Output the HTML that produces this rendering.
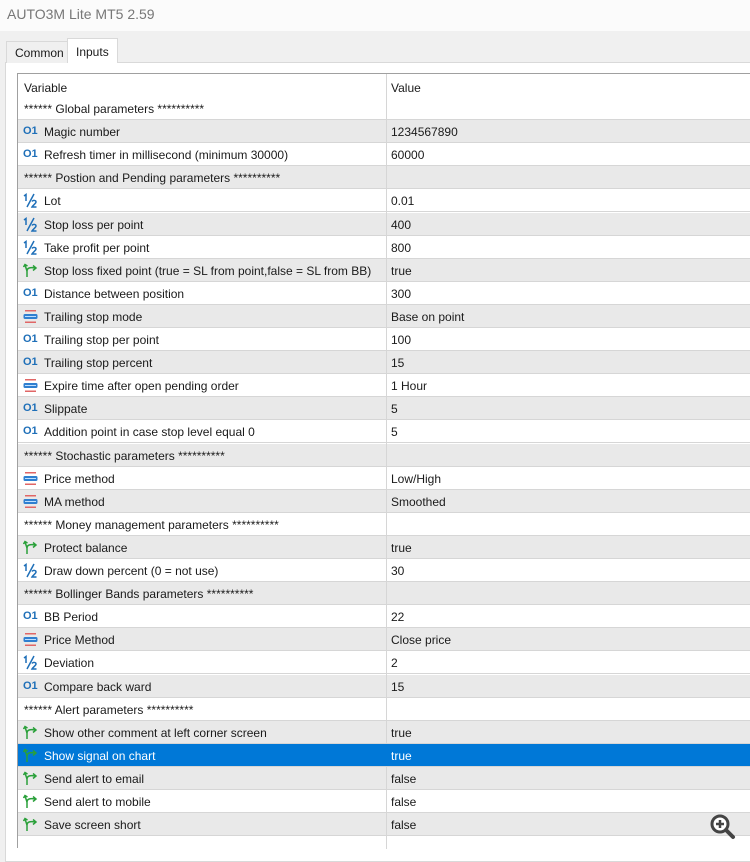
<!DOCTYPE html>
<html><head><style>
*{margin:0;padding:0;box-sizing:border-box}
body{width:750px;height:853px;overflow:hidden;background:#f0f0f0;font-family:"Liberation Sans",sans-serif;font-size:12px;color:#1a1a1a;position:relative}
.title{position:absolute;left:0;top:0;width:750px;height:31px;background:#fbfbfb;color:#777;font-size:14px;padding:6px 0 0 7px}
.panel{position:absolute;left:5px;top:62px;width:760px;height:800px;background:#fff;border:1px solid #d9d9d9}
.tab{position:absolute;top:41px;height:22px;border:1px solid #d9d9d9;border-bottom:none;font-size:12px;padding:4px 0 0 8px}
.t1{left:6px;width:62px;background:#f0f0f0}
.t2{left:67px;top:38px;height:25px;width:51px;background:#fff;padding-top:6px;z-index:2}
.tbl{position:absolute;left:17px;top:73px;width:740px;height:775px;border:1px solid #a0a0a0;border-bottom:none;background:#fff}
.row{position:absolute;left:0;width:740px;height:23.1px;border-bottom:1px solid #d6d6d6}
.row.g{background:#e9e9e9}
.row.sel{background:#0078d7;color:#fff;z-index:3}
.row span{position:absolute;top:5px;white-space:nowrap}
.v{left:373px}
.row .ic{position:absolute;left:5px;top:4px;width:15px;height:15px}
.div{position:absolute;left:368px;top:0;width:1px;height:775px;background:#d6d6d6;z-index:2}
.i01{color:#1e6fb8;font-size:11px;font-weight:bold;left:5px!important;top:5px!important}
</style></head><body>
<div class="title">AUTO3M Lite MT5 2.59</div>
<div class="panel"></div>
<div class="tab t1">Common</div>
<div class="tab t2">Inputs</div>
<div class="tbl">
<div class="div"></div>
<div class="row" style="top:0;height:23px;border:none"><span style="left:6px;top:7px">Variable</span><span class="v" style="top:7px">Value</span></div>
<div id="rows"></div>
</div>
<svg style="position:absolute;left:708px;top:812px" width="30" height="30" viewBox="0 0 30 30"><circle cx="12" cy="12" r="8" fill="#fff" stroke="#444" stroke-width="3"/><path d="M8 12h8M12 8v8" stroke="#444" stroke-width="2.5"/><path d="M18 18l7 7" stroke="#444" stroke-width="4" stroke-linecap="round"/></svg>
<script>
const R=[
["h","****** Global parameters **********",""],
["1","Magic number","1234567890"],
["1","Refresh timer in millisecond (minimum 30000)","60000"],
["h","****** Postion and Pending parameters **********",""],
["d","Lot","0.01"],
["d","Stop loss per point","400"],
["d","Take profit per point","800"],
["b","Stop loss fixed point (true = SL from point,false = SL from BB)","true"],
["1","Distance between position","300"],
["e","Trailing stop mode","Base on point"],
["1","Trailing stop per point","100"],
["1","Trailing stop percent","15"],
["e","Expire time after open pending order","1 Hour"],
["1","Slippate","5"],
["1","Addition point in case stop level equal 0","5"],
["h","****** Stochastic parameters **********",""],
["e","Price method","Low/High"],
["e","MA method","Smoothed"],
["h","****** Money management parameters **********",""],
["b","Protect balance","true"],
["d","Draw down percent (0 = not use)","30"],
["h","****** Bollinger Bands parameters **********",""],
["1","BB Period","22"],
["e","Price Method","Close price"],
["d","Deviation","2"],
["1","Compare back ward","15"],
["h","****** Alert parameters **********",""],
["b","Show other comment at left corner screen","true"],
["b","Show signal on chart","true"],
["b","Send alert to email","false"],
["b","Send alert to mobile","false"],
["b","Save screen short","false"]];
let h="";
R.forEach((r,i)=>{
 const top=23+i*23.1;
 let cls="row"+(i==28?" sel":(i%2?" g":""));
 let ic="";
 if(r[0]=="1")ic='<span class="i01">O1</span>';
 else if(r[0]=="d")ic='<svg class="ic" viewBox="0 0 15 15"><path d="M1 3l2-1.5V8" stroke="#1e6fb8" stroke-width="1.5" fill="none"/><path d="M11 1L4 14" stroke="#1e6fb8" stroke-width="1.5"/><path d="M9 8.5c1-1.5 4-1.5 4 .5 0 1.5-3 3-4 5h4.5" stroke="#1e6fb8" stroke-width="1.5" fill="none"/></svg>';
 else if(r[0]=="b")ic='<svg class="ic" viewBox="0 0 15 15"><path d="M4 14V8C4 5 7 4 12 5" stroke="#2aa03a" stroke-width="1.5" fill="none"/><path d="M4 8L2 2M0.5 4L2 1.5 4.5 3" stroke="#2aa03a" stroke-width="1.5" fill="none"/><path d="M10 2.5l3 2.5-3 2.5" stroke="#2aa03a" stroke-width="1.5" fill="none"/></svg>';
 else if(r[0]=="e")ic='<svg class="ic" viewBox="0 0 15 15"><rect x="2" y="1" width="11" height="1.5" fill="#e06666"/><rect x="0.5" y="5" width="14" height="5" rx="1.5" fill="#2f7fd0"/><rect x="2" y="7" width="11" height="1" fill="#bfe0ff"/><rect x="2" y="12.5" width="11" height="1.5" fill="#e06666"/></svg>';
 const nl=r[0]=="h"?6:26;
 h+=`<div class="${cls}" style="top:${top}px">${ic}<span style="left:${nl}px">${r[1]}</span><span class="v">${r[2]}</span></div>`;
});
document.getElementById("rows").outerHTML=h;
</script>
</body></html>
